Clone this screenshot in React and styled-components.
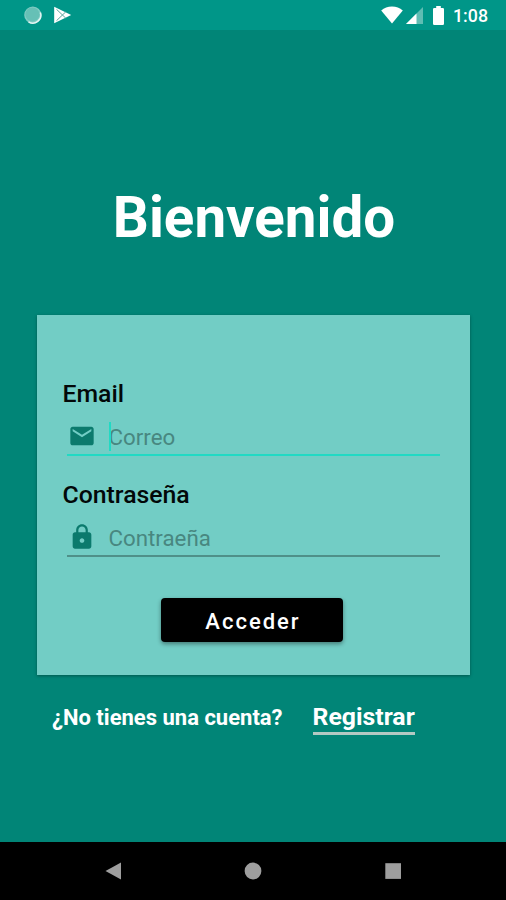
import styled, { createGlobalStyle } from 'styled-components';

export default function App() {
    return (
        <>
            <GlobalStyle />
            <Screen>
                <StatusBar>
                    <Notifications>
                        <SyncIcon />
                        <PlayIcon />
                    </Notifications>
                    <SystemIcons>
                        <WifiIcon />
                        <SignalIcon />
                        <BatteryIcon />
                        <Clock>1:08</Clock>
                    </SystemIcons>
                </StatusBar>
                <Content>
                    <Title>Bienvenido</Title>
                    <Card>
                        <Label htmlFor="email">Email</Label>
                        <Field $active>
                            <MailIcon />
                            <Cursor />
                            <Input id="email" type="email" placeholder="Correo" />
                        </Field>
                        <Label htmlFor="password">Contraseña</Label>
                        <Field>
                            <LockIcon />
                            <Input id="password" type="password" placeholder="Contraeña" />
                        </Field>
                        <Button type="button">Acceder</Button>
                    </Card>
                    <Footer>
                        <Question>¿No tienes una cuenta?</Question>
                        <Register href="#">Registrar</Register>
                    </Footer>
                </Content>
                <NavBar>
                    <NavIcon viewBox="0 0 20 20"><path d="M2.5 10 18 1.5v17z" /></NavIcon>
                    <NavIcon viewBox="0 0 20 20"><circle cx="10" cy="10" r="8.4" /></NavIcon>
                    <NavIcon viewBox="0 0 20 20"><path d="M2.3 2.2h15.7v15.7H2.3z" /></NavIcon>
                </NavBar>
            </Screen>
        </>
    );
}

function SyncIcon() {
    return (
        <svg width="18" height="18" viewBox="0 0 18 18">
            <circle cx="8.8" cy="9" r="8.6" fill="#7fcbc3" />
            <circle cx="8.4" cy="8.4" r="7" fill="#66c0b6" />
            <path d="M16.4 6.5A8 8 0 0 1 4.5 15.8" fill="none" stroke="#e4f5f3" strokeWidth="1.5" />
        </svg>
    );
}

function PlayIcon() {
    return (
        <svg width="18" height="18" viewBox="0 0 18 18">
            <path d="M.2.8 17.2 9 .2 17.2z" fill="#fff" />
            <path d="M2.5 3.3 11.8 12.2M2.5 14.7 11.8 5.8" fill="none" stroke="#5da69e" strokeWidth="1" />
        </svg>
    );
}

function WifiIcon() {
    return (
        <svg width="22" height="18" viewBox="0 0 22 18">
            <path d="M.2 4.4C3.2 1.8 6.8.4 11 .4s7.8 1.4 10.8 4L11 17.6z" fill="#fff" />
        </svg>
    );
}

function SignalIcon() {
    return (
        <svg width="17" height="17" viewBox="0 0 17 17">
            <path d="M17 0v17H0z" fill="#5fbdb3" />
            <path d="M10.5 6.5V17H0z" fill="#fff" />
        </svg>
    );
}

function BatteryIcon() {
    return (
        <svg width="11" height="19" viewBox="0 0 11 19">
            <path d="M3.2 0h4.6v2h2q1.2 0 1.2 1.2v14.6q0 1.2-1.2 1.2H1.2Q0 19 0 17.8V3.2Q0 2 1.2 2h2z" fill="#fff" />
        </svg>
    );
}

function MailIcon() {
    return (
        <FieldIcon viewBox="0 0 24 24">
            <path d="M20 4H4c-1.1 0-1.99.9-1.99 2L2 18c0 1.1.9 2 2 2h16c1.1 0 2-.9 2-2V6c0-1.1-.9-2-2-2zm0 4l-8 5-8-5V6l8 5 8-5v2z" />
        </FieldIcon>
    );
}

function LockIcon() {
    return (
        <FieldIcon viewBox="0 0 24 24">
            <path d="M18 8h-1V6c0-2.76-2.24-5-5-5S7 3.24 7 6v2H6c-1.1 0-2 .9-2 2v10c0 1.1.9 2 2 2h12c1.1 0 2-.9 2-2V10c0-1.1-.9-2-2-2zm-6 9c-1.1 0-2-.9-2-2s.9-2 2-2 2 .9 2 2-.9 2-2 2zm3.1-9H8.9V6c0-1.71 1.39-3.1 3.1-3.1 1.71 0 3.1 1.39 3.1 3.1v2z" />
        </FieldIcon>
    );
}

const GlobalStyle = createGlobalStyle`
    * {
        box-sizing: border-box;
    }
    body {
        margin: 0;
        font-family: Roboto, sans-serif;
    }
    svg {
        display: block;
    }
`;

const Screen = styled.div`
    width: 506px;
    height: 900px;
    display: flex;
    flex-direction: column;
    overflow: hidden;
    background-color: #018577;
`;

const StatusBar = styled.header`
    height: 30px;
    padding: 0 18px 0 24px;
    display: flex;
    align-items: center;
    justify-content: space-between;
    background-color: #009688;
`;

const Notifications = styled.div`
    display: flex;
    align-items: center;
    gap: 12px;
`;

const SystemIcons = styled.div`
    display: flex;
    align-items: center;

    svg + svg {
        margin-left: 3px;
    }
    svg:nth-child(3) {
        margin-left: 10px;
    }
`;

const Clock = styled.span`
    margin-left: 9px;
    padding-top: 2px;
    color: #fff;
    font-size: 17.8px;
    font-weight: 500;
    line-height: 30px;
`;

const Content = styled.main`
    flex: 1;
    display: flex;
    flex-direction: column;
    align-items: center;
`;

const Title = styled.h1`
    margin: 153px 0 0 2px;
    color: #fff;
    font-size: 56.5px;
    font-weight: 700;
    line-height: 70px;
`;

const Card = styled.form`
    width: 433px;
    height: 360px;
    margin-top: 62px;
    padding: 63px 25px 0;
    display: flex;
    flex-direction: column;
    background-color: #72cdc5;
    box-shadow: 0 1px 3px rgba(0, 0, 0, 0.35);
`;

const Label = styled.label`
    padding-left: 1px;
    color: #020808;
    font-size: 24.8px;
    font-weight: 500;
    line-height: 32px;
`;

const Field = styled.div`
    position: relative;
    height: 46px;
    margin: 0 5px 23px;
    padding: 8px 0 0 1px;
    display: flex;
    align-items: center;
    border-bottom: 2px solid ${({ $active }) => ($active ? '#20dac4' : '#4f9089')};
`;

const FieldIcon = styled.svg`
    width: 28px;
    height: 28px;
    flex-shrink: 0;
    fill: #0b7a6d;
`;

const Cursor = styled.span`
    position: absolute;
    left: 42px;
    top: 12px;
    width: 2px;
    height: 29px;
    background-color: #20dac4;
`;

const Input = styled.input`
    flex: 1;
    min-width: 0;
    height: 32px;
    margin-left: 13px;
    padding: 2px 0 0;
    border: none;
    outline: none;
    background: transparent;
    color: #020808;
    font-family: inherit;
    font-size: 22.3px;

    &::placeholder {
        color: #488780;
        opacity: 1;
    }
`;

const Button = styled.button`
    align-self: center;
    width: 182px;
    height: 44px;
    margin: 18px 2px 0 0;
    padding: 3px 0 0 2px;
    border: none;
    border-radius: 4px;
    background-color: #000;
    box-shadow: 0 2px 4px rgba(0, 0, 0, 0.4);
    color: #fff;
    font-family: inherit;
    font-size: 22px;
    font-weight: 500;
    letter-spacing: 2px;
    line-height: 41px;
    cursor: pointer;
`;

const Footer = styled.div`
    align-self: flex-start;
    margin: 28px 0 0 52px;
    display: flex;
    align-items: flex-start;
    gap: 30px;
    color: #fff;
    font-weight: 700;
`;

const Question = styled.span`
    font-size: 22px;
    line-height: 30px;
`;

const Register = styled.a`
    height: 32px;
    border-bottom: 3px solid #b3c9c3;
    color: inherit;
    font-size: 24.8px;
    line-height: 28px;
    text-decoration: none;
`;

const NavBar = styled.nav`
    height: 58px;
    padding: 0 103px;
    display: flex;
    align-items: center;
    justify-content: space-between;
    background-color: #000;
`;

const NavIcon = styled.svg`
    width: 20px;
    height: 20px;
    fill: #9e9e9e;
`;
